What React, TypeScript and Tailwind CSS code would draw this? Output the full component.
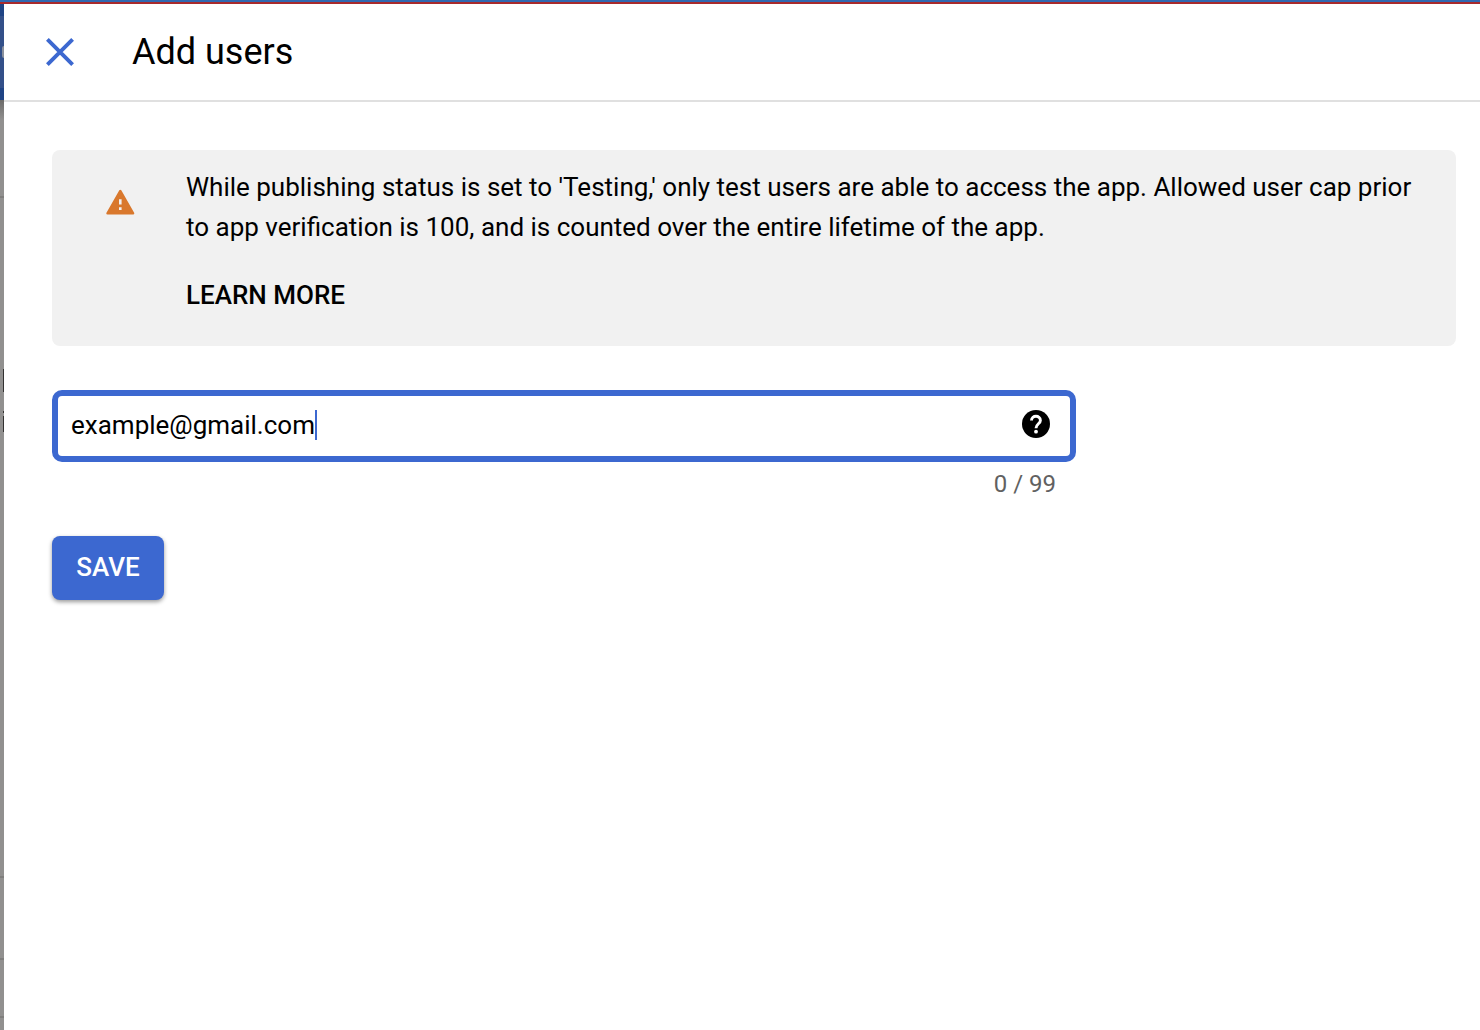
import { useState } from "react";

function PageEdge() {
  return (
    <div aria-hidden="true" className="flex w-1 shrink-0 flex-col overflow-hidden bg-[#91908f]">
      <div className="flex h-24 flex-col justify-center bg-[#1f4485]">
        <div className="flex h-[72px] flex-col items-end justify-center bg-[#335089]">
          <div className="h-3 w-0.5 rounded-l-full bg-[#8a909c]" />
        </div>
      </div>
      <div className="h-5 bg-linear-to-b from-[#6c6b6a] to-[#91908f]" />
      <div className="mt-[76px] h-0.5 bg-[#7f7e7d]" />
      <div className="mt-[171px] h-[23px] w-px self-end bg-[#333231]" />
      <div className="mt-[19px] h-0.5 w-px self-end bg-[#333231]" />
      <div className="mt-[3px] h-4 w-px self-end bg-[#333231]" />
      <div className="mt-[444px] h-0.5 bg-[#7f7e7d]" />
      <div className="mt-20 h-0.5 bg-[#7f7e7d]" />
      <div className="mt-14 h-0.5 bg-[#7f7e7d]" />
    </div>
  );
}

function CloseIcon() {
  return (
    <svg viewBox="0 0 28 28" className="size-7" fill="none" stroke="currentColor" strokeWidth="3.9" aria-hidden="true">
      <path d="M1.4 1.4 26.6 26.6M26.6 1.4 1.4 26.6" />
    </svg>
  );
}

function WarningIcon() {
  return (
    <svg viewBox="0 0 29 26" className="h-[26px] w-[29px] shrink-0" aria-hidden="true">
      <path
        fill="#d9782d"
        fillRule="evenodd"
        d="M13.300 1.300Q14.300 0 15.300 1.300L28 23.500Q28.900 25.500 27.100 25.500H1.500Q-.3 25.500 .6 23.500ZM13 10.200V15.600H15.600V10.200ZM13 18.200V20.900H15.600V18.200Z"
      />
    </svg>
  );
}

function HelpIcon() {
  return (
    <svg viewBox="0 0 28 28" className="size-7" fill="none" aria-hidden="true">
      <circle cx="14" cy="14" r="14" fill="currentColor" />
      <path
        d="M9.500 10.600C9.500 4.900 18.400 4.900 18.400 10.400C18.400 13.700 14 13.900 14 18.200"
        stroke="white"
        strokeWidth="2.9"
      />
      <circle cx="14" cy="21.700" r="1.900" fill="white" />
    </svg>
  );
}

export default function App() {
  const [email, setEmail] = useState("example@gmail.com");

  return (
    <div className="flex min-h-screen flex-col bg-white font-[Roboto,sans-serif] text-black">
      <div className="h-0.5 bg-[#3069b1]" />
      <div className="h-0.5 bg-[#a82a2c]" />
      <div className="flex grow">
        <PageEdge />
        <div className="min-w-0 grow">
          <header className="flex h-[98px] items-center gap-[58px] border-b-2 border-[#e0e0e0] pl-[42px]">
            <button type="button" aria-label="Close" className="text-[#3c68d0]">
              <CloseIcon />
            </button>
            <h1 className="text-4xl">Add users</h1>
          </header>

          <main className="px-12 pt-12 pr-6">
            <section className="flex items-start gap-[51px] rounded-lg bg-[#f1f1f1] pt-[17px] pr-10 pb-[31px] pl-[54px]">
              <div className="pt-[22px]">
                <WarningIcon />
              </div>
              <div className="text-[26px] leading-10">
                <p>
                  While publishing status is set to 'Testing,' only test users are able to access the app. Allowed user
                  cap prior to app verification is 100, and is counted over the entire lifetime of the app.
                </p>
                <a href="#learn-more" className="mt-7 block w-fit font-medium">
                  LEARN MORE
                </a>
              </div>
            </section>

            <form className="mt-11 max-w-[1024px]" onSubmit={(e) => e.preventDefault()}>
              <div className="flex h-[72px] items-center rounded-[10px] border-[6px] border-[#3c68d0] pr-5 pb-0.5 pl-[13px]">
                <input
                  type="email"
                  aria-label="User email"
                  value={email}
                  onChange={(e) => setEmail(e.target.value)}
                  className="field-sizing-content text-[26px] caret-transparent outline-none"
                />
                <span aria-hidden="true" className="h-[30px] w-0.5 bg-[#3c68d0]" />
                <button type="button" aria-label="Help" className="ml-auto pb-0.5">
                  <HelpIcon />
                </button>
              </div>
              <p className="mt-2 pr-5 text-right text-2xl leading-7 text-[#616161]">0 / 99</p>
              <button
                type="submit"
                className="mt-[38px] h-16 min-w-28 rounded-lg bg-[#3c68d0] px-6 pb-0.5 text-[26px] font-medium text-white shadow-[0_2px_4px_rgba(0,0,0,0.4)]"
              >
                SAVE
              </button>
            </form>
          </main>
        </div>
      </div>
    </div>
  );
}
